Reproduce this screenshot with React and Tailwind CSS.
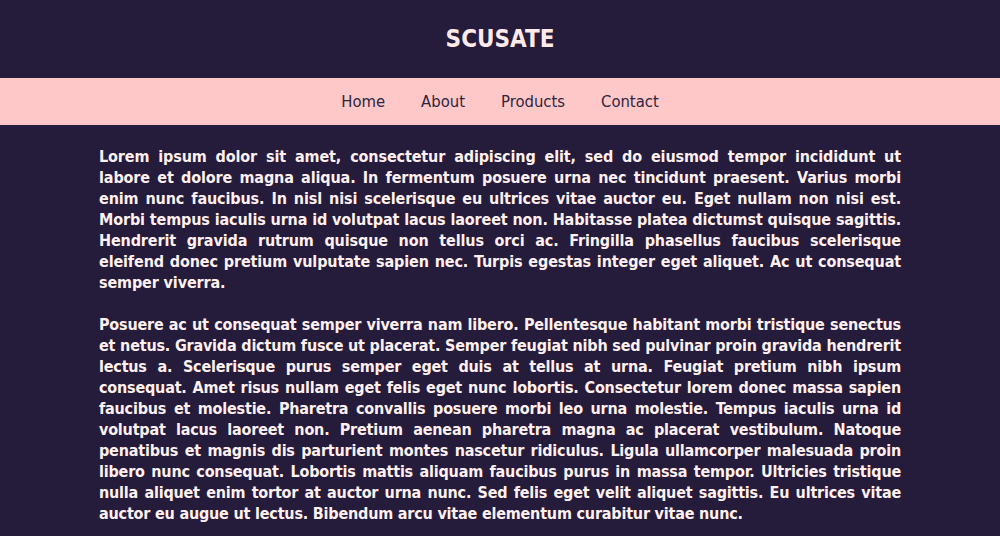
import React from "react";

const links = ["Home", "About", "Products", "Contact"];

const paragraphs = [
  {
    text: "Lorem ipsum dolor sit amet, consectetur adipiscing elit, sed do eiusmod tempor incididunt ut labore et dolore magna aliqua. In fermentum posuere urna nec tincidunt praesent. Varius morbi enim nunc faucibus. In nisl nisi scelerisque eu ultrices vitae auctor eu. Eget nullam non nisi est. Morbi tempus iaculis urna id volutpat lacus laoreet non. Habitasse platea dictumst quisque sagittis. Hendrerit gravida rutrum quisque non tellus orci ac. Fringilla phasellus faucibus scelerisque eleifend donec pretium vulputate sapien nec. Turpis egestas integer eget aliquet. Ac ut consequat semper viverra.",
    cls: "tracking-[-0.13px]",
  },
  {
    text: "Posuere ac ut consequat semper viverra nam libero. Pellentesque habitant morbi tristique senectus et netus. Gravida dictum fusce ut placerat. Semper feugiat nibh sed pulvinar proin gravida hendrerit lectus a. Scelerisque purus semper eget duis at tellus at urna. Feugiat pretium nibh ipsum consequat. Amet risus nullam eget felis eget nunc lobortis. Consectetur lorem donec massa sapien faucibus et molestie. Pharetra convallis posuere morbi leo urna molestie. Tempus iaculis urna id volutpat lacus laoreet non. Pretium aenean pharetra magna ac placerat vestibulum. Natoque penatibus et magnis dis parturient montes nascetur ridiculus. Ligula ullamcorper malesuada proin libero nunc consequat. Lobortis mattis aliquam faucibus purus in massa tempor. Ultricies tristique nulla aliquet enim tortor at auctor urna nunc. Sed felis eget velit aliquet sagittis. Eu ultrices vitae auctor eu augue ut lectus. Bibendum arcu vitae elementum curabitur vitae nunc.",
    cls: "tracking-[-0.2px]",
  },
];

export default function App() {
  return (
    <div className="min-h-screen bg-[#251b3a] font-['DejaVu_Sans_Condensed','DejaVu_Sans',sans-serif]">
      {/* header */}
      <header className="h-[78px] flex items-center justify-center">
        <h1 className="text-[24px] leading-none font-bold text-[#ffe9e9]">SCUSATE</h1>
      </header>

      <nav className="h-[47px] bg-[#ffc8c8] flex items-center justify-center gap-[36px] pt-[2px]">
        {links.map((l) => (
          <a key={l} href="#" className="text-[16.5px] text-[#2d2540]">
            {l}
          </a>
        ))}
      </nav>

      <main className="w-[802px] mx-auto pt-[21px]">
        {paragraphs.map((p, i) => (
          <p key={i} className={`text-[16px] leading-[21px] font-bold text-[#fff0f0] text-justify mb-[21px] ${p.cls}`}>
            {p.text}
          </p>
        ))}
      </main>
    </div>
  );
}
